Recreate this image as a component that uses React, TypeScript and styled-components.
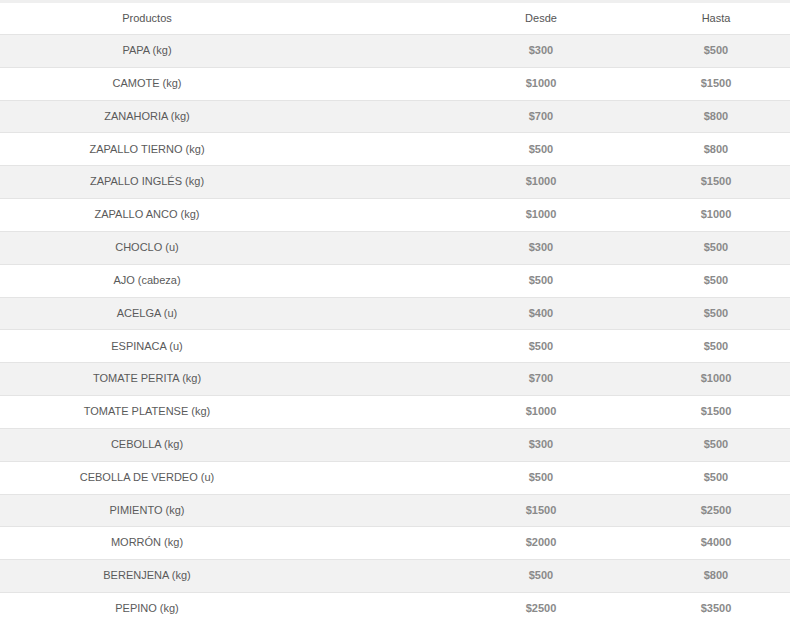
import React from "react";
import styled, { createGlobalStyle } from "styled-components";

const Global = createGlobalStyle`
  html, body { margin: 0; padding: 0; background: #ffffff; }
  body { font-family: "Liberation Sans", Arial, sans-serif; }
`;

const Viewport = styled.div`
  width: 790px;
  overflow: hidden;
  border-top: 3px solid #efefef;
`;

const Table = styled.div`
  width: 944px;
  margin-left: -150px;
  display: grid;
  grid-template-columns: 594px 194px 156px;
`;

const Row = styled.div<{ $striped?: boolean; $head?: boolean }>`
  display: contents;
  & > div {
    background: ${(p) => (p.$striped ? "#f2f2f2" : "#ffffff")};
    border-bottom: 1px solid #e4e4e4;
    height: ${(p) => (p.$head ? "32px" : "32.83px")};
  }
`;

const Cell = styled.div<{ $price?: boolean; $head?: boolean }>`
  display: flex;
  align-items: center;
  justify-content: center;
  box-sizing: border-box;
  font-size: 11px;
  line-height: 15.7px;
  font-weight: ${(p) => (p.$price && !p.$head ? 700 : 400)};
  color: ${(p) => (p.$head ? "#555555" : p.$price ? "#8a8a8a" : "#5a5a5a")};
  white-space: nowrap;
`;

const data: [string, string, string][] = [
  ["PAPA (kg)", "$300", "$500"],
  ["CAMOTE (kg)", "$1000", "$1500"],
  ["ZANAHORIA (kg)", "$700", "$800"],
  ["ZAPALLO TIERNO (kg)", "$500", "$800"],
  ["ZAPALLO INGLÉS (kg)", "$1000", "$1500"],
  ["ZAPALLO ANCO (kg)", "$1000", "$1000"],
  ["CHOCLO (u)", "$300", "$500"],
  ["AJO (cabeza)", "$500", "$500"],
  ["ACELGA (u)", "$400", "$500"],
  ["ESPINACA (u)", "$500", "$500"],
  ["TOMATE PERITA (kg)", "$700", "$1000"],
  ["TOMATE PLATENSE (kg)", "$1000", "$1500"],
  ["CEBOLLA (kg)", "$300", "$500"],
  ["CEBOLLA DE VERDEO (u)", "$500", "$500"],
  ["PIMIENTO (kg)", "$1500", "$2500"],
  ["MORRÓN (kg)", "$2000", "$4000"],
  ["BERENJENA (kg)", "$500", "$800"],
  ["PEPINO (kg)", "$2500", "$3500"],
];

export default function App() {
  return (
    <>
      <Global />
      <Viewport>
        <Table>
          <Row $head>
            <Cell $head>Productos</Cell>
            <Cell $head $price>Desde</Cell>
            <Cell $head $price>Hasta</Cell>
          </Row>
          {data.map(([name, from, to], i) => (
            <Row key={name} $striped={i % 2 === 0}>
              <Cell>{name}</Cell>
              <Cell $price>{from}</Cell>
              <Cell $price>{to}</Cell>
            </Row>
          ))}
        </Table>
      </Viewport>
    </>
  );
}
